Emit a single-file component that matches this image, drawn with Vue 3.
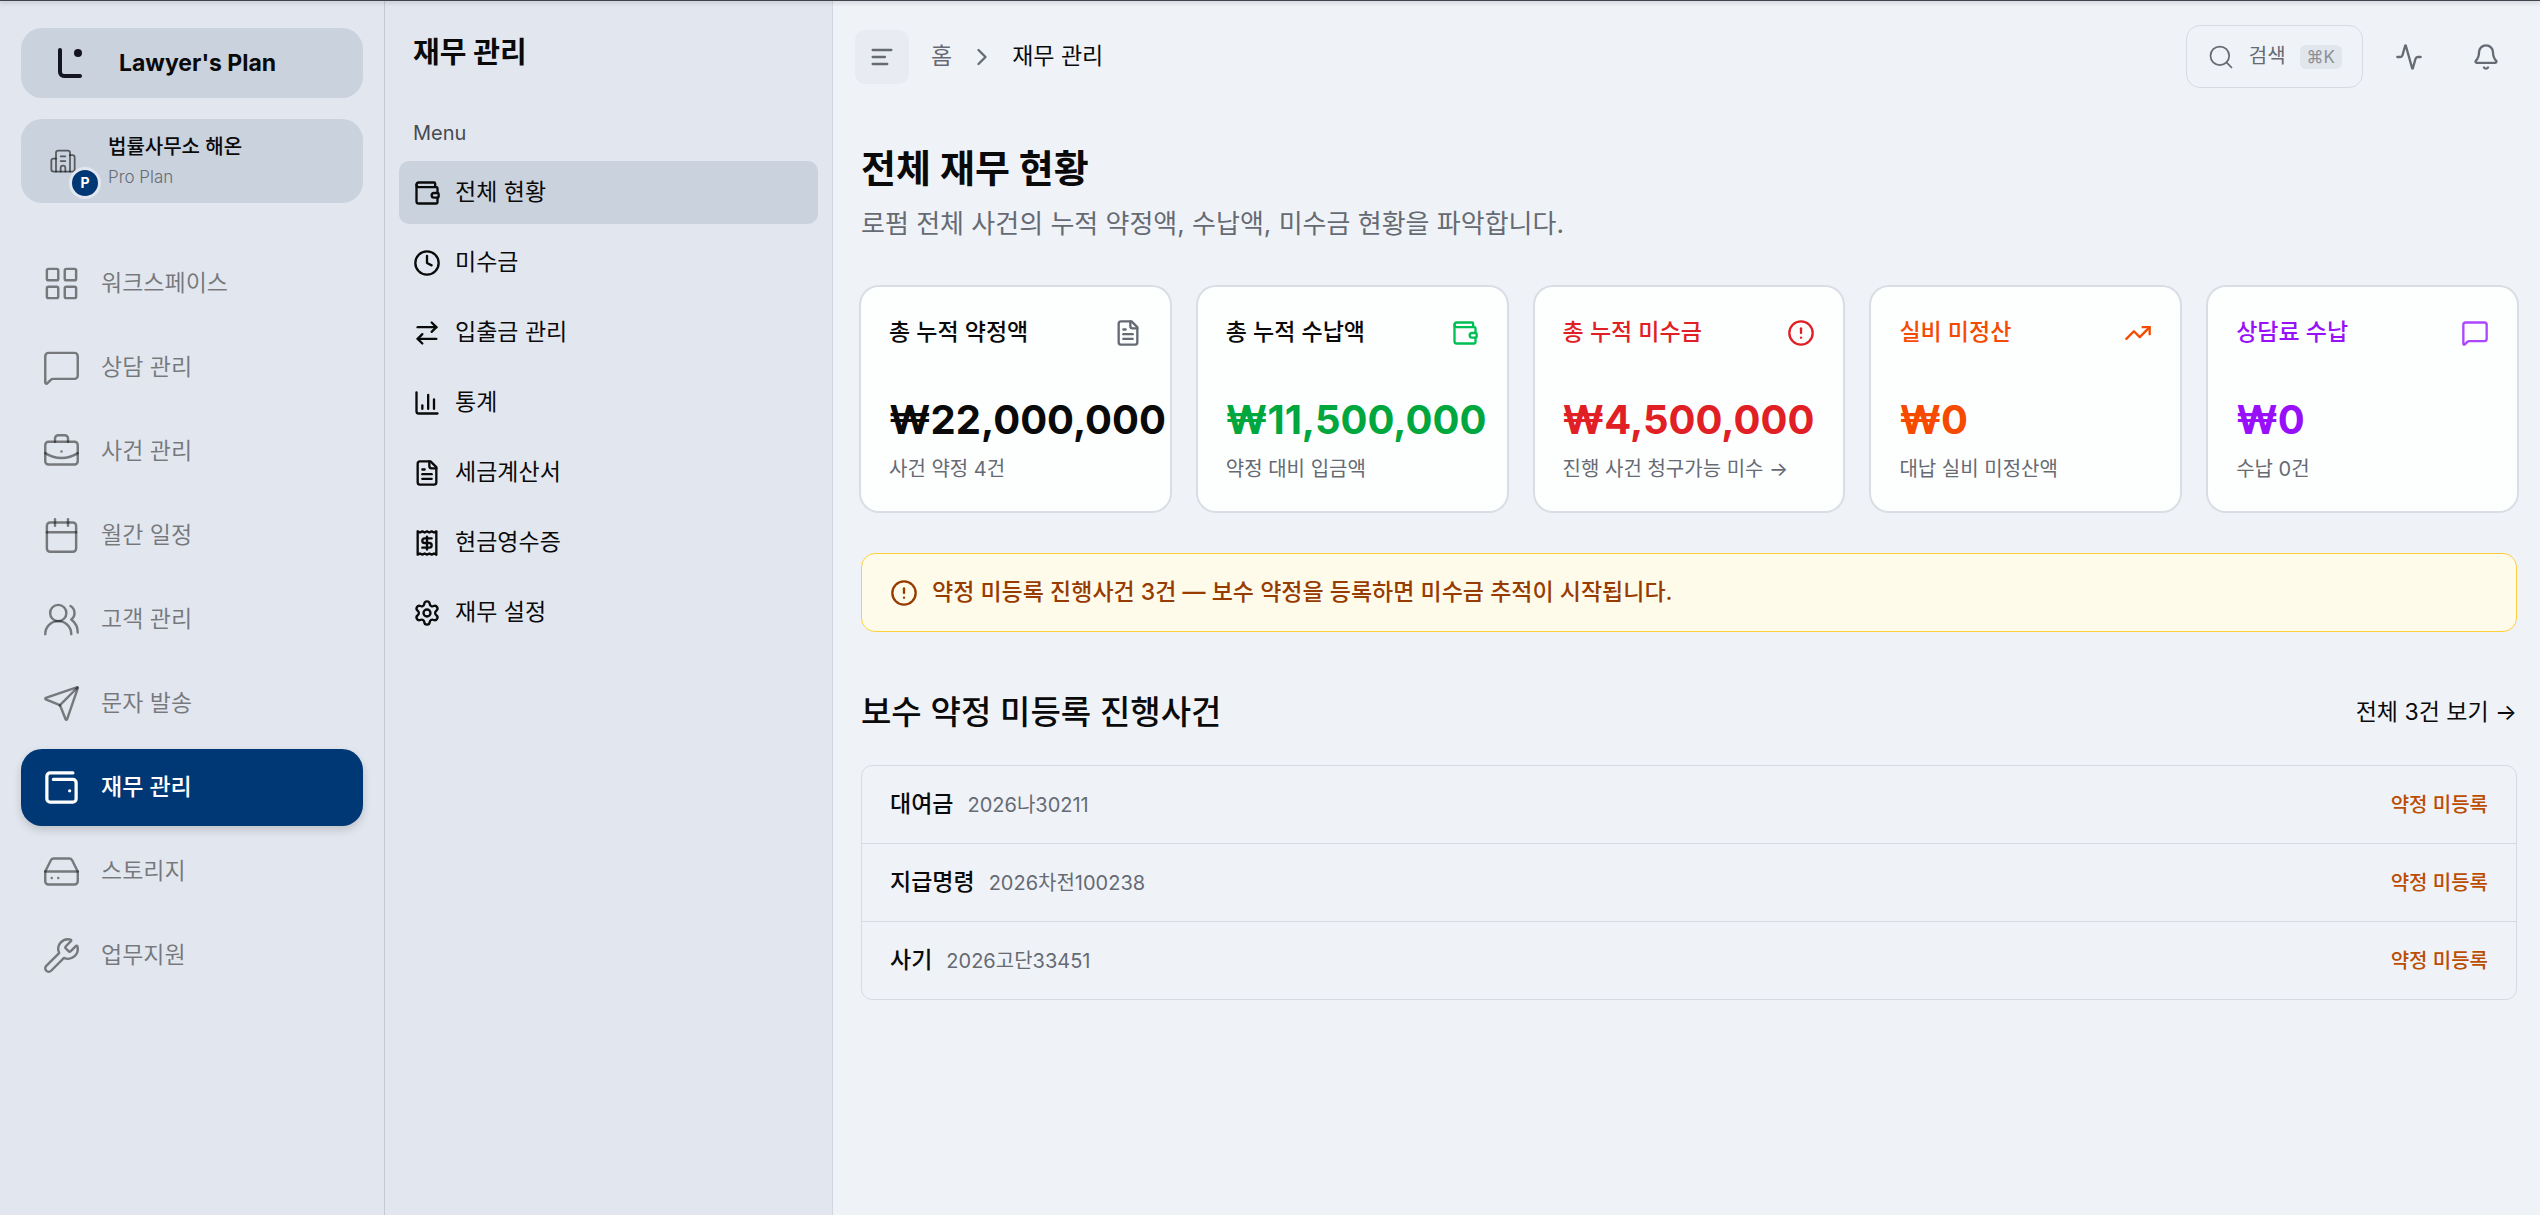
<template>
  <div class="app">
    <!-- Primary sidebar -->
    <aside class="sidebar">
      <a href="#" class="brand">
        <svg class="brand-logo" viewBox="0 0 28 34">
          <path d="M4 4v22a4 4 0 0 0 4 4h16" />
          <circle cx="22" cy="7" r="4" />
        </svg>
        <span>Lawyer's Plan</span>
      </a>

      <button type="button" class="office">
        <span class="office-icon">
          <svg class="icon thin" viewBox="0 0 24 24">
            <path v-for="d in icons.building" :key="d" :d="d" />
          </svg>
          <span class="office-badge">P</span>
        </span>
        <span class="office-text">
          <span class="office-name">법률사무소 해온</span>
          <span class="office-plan">Pro Plan</span>
        </span>
      </button>

      <nav class="main-nav">
        <a
          v-for="item in mainNav"
          :key="item.label"
          href="#"
          :class="['main-link', { 'is-active': item.active }]"
        >
          <svg class="icon" viewBox="0 0 24 24">
            <path v-for="d in icons[item.icon]" :key="d" :d="d" />
          </svg>
          <span>{{ item.label }}</span>
        </a>
      </nav>
    </aside>

    <!-- Section menu -->
    <aside class="panel">
      <h2 class="panel-title">재무 관리</h2>
      <div class="panel-label">Menu</div>
      <nav class="sub-nav">
        <a
          v-for="item in subNav"
          :key="item.label"
          href="#"
          :class="['sub-link', { 'is-active': item.active }]"
        >
          <svg class="icon" viewBox="0 0 24 24">
            <path v-for="d in icons[item.icon]" :key="d" :d="d" />
          </svg>
          <span>{{ item.label }}</span>
        </a>
      </nav>
    </aside>

    <main class="main">
      <header class="topbar">
        <button type="button" class="toggle" aria-label="메뉴 접기">
          <svg class="icon" viewBox="0 0 24 24">
            <path d="M4 6h16M4 12h10.500M4 18h12.500" />
          </svg>
        </button>
        <nav class="crumbs">
          <a href="#">홈</a>
          <svg class="icon" viewBox="0 0 24 24"><path d="m9 18 6-6-6-6" /></svg>
          <span class="crumb-current">재무 관리</span>
        </nav>
        <div class="actions">
          <button type="button" class="search">
            <svg class="icon thin" viewBox="0 0 24 24">
              <path v-for="d in icons.search" :key="d" :d="d" />
            </svg>
            <span>검색</span>
            <kbd>⌘K</kbd>
          </button>
          <button type="button" class="icon-button" aria-label="활동">
            <svg class="icon" viewBox="0 0 24 24">
              <path v-for="d in icons.activity" :key="d" :d="d" />
            </svg>
          </button>
          <button type="button" class="icon-button" aria-label="알림">
            <svg class="icon" viewBox="0 0 24 24">
              <path v-for="d in icons.bell" :key="d" :d="d" />
            </svg>
          </button>
        </div>
      </header>

      <div class="content">
        <h1>전체 재무 현황</h1>
        <p class="lead">로펌 전체 사건의 누적 약정액, 수납액, 미수금 현황을 파악합니다.</p>

        <section class="stats">
          <article v-for="s in stats" :key="s.title" :class="['stat', s.tone]">
            <div class="stat-head">
              <h3>{{ s.title }}</h3>
              <svg class="icon" viewBox="0 0 24 24">
                <path v-for="d in icons[s.icon]" :key="d" :d="d" />
              </svg>
            </div>
            <div class="stat-value">{{ s.value }}</div>
            <div class="stat-note">{{ s.note }}</div>
          </article>
        </section>

        <div class="notice">
          <svg class="icon" viewBox="0 0 24 24">
            <path v-for="d in icons.alert" :key="d" :d="d" />
          </svg>
          <span>약정 미등록 진행사건 3건 — 보수 약정을 등록하면 미수금 추적이 시작됩니다.</span>
        </div>

        <div class="section-head">
          <h2>보수 약정 미등록 진행사건</h2>
          <a href="#">전체 3건 보기 →</a>
        </div>

        <ul class="cases">
          <li v-for="c in cases" :key="c.number">
            <a href="#">
              <span class="case-name">{{ c.name }}</span>
              <span class="case-number">{{ c.number }}</span>
              <span class="case-status">약정 미등록</span>
            </a>
          </li>
        </ul>
      </div>
    </main>
  </div>
</template>

<script setup>
const icons = {
  building: [
    'M10 12h4',
    'M10 8h4',
    'M14 21v-3a2 2 0 0 0-4 0v3',
    'M6 10H4a2 2 0 0 0-2 2v7a2 2 0 0 0 2 2h16a2 2 0 0 0 2-2V9a2 2 0 0 0-2-2h-2',
    'M6 21V5a2 2 0 0 1 2-2h8a2 2 0 0 1 2 2v16'
  ],
  grid: [
    'M4 3h5a1 1 0 0 1 1 1v5a1 1 0 0 1-1 1H4a1 1 0 0 1-1-1V4a1 1 0 0 1 1-1z',
    'M15 3h5a1 1 0 0 1 1 1v5a1 1 0 0 1-1 1h-5a1 1 0 0 1-1-1V4a1 1 0 0 1 1-1z',
    'M15 14h5a1 1 0 0 1 1 1v5a1 1 0 0 1-1 1h-5a1 1 0 0 1-1-1v-5a1 1 0 0 1 1-1z',
    'M4 14h5a1 1 0 0 1 1 1v5a1 1 0 0 1-1 1H4a1 1 0 0 1-1-1v-5a1 1 0 0 1 1-1z'
  ],
  message: [
    'M22 17a2 2 0 0 1-2 2H6.828a2 2 0 0 0-1.414.586l-2.202 2.202A.71.71 0 0 1 2 21.286V5a2 2 0 0 1 2-2h16a2 2 0 0 1 2 2z'
  ],
  briefcase: [
    'M12 12h.01',
    'M16 6V4a2 2 0 0 0-2-2h-4a2 2 0 0 0-2 2v2',
    'M22 13a18.150 18.150 0 0 1-20 0',
    'M4 6h16a2 2 0 0 1 2 2v10a2 2 0 0 1-2 2H4a2 2 0 0 1-2-2V8a2 2 0 0 1 2-2z'
  ],
  calendar: [
    'M8 2v4',
    'M16 2v4',
    'M5 4h14a2 2 0 0 1 2 2v14a2 2 0 0 1-2 2H5a2 2 0 0 1-2-2V6a2 2 0 0 1 2-2z',
    'M3 10h18'
  ],
  users: [
    'M18 21a8 8 0 0 0-16 0',
    'M5 8a5 5 0 1 0 10 0a5 5 0 1 0-10 0',
    'M22 20c0-3.370-2-6.500-4-8a5 5 0 0 0-.45-8.300'
  ],
  send: [
    'M14.536 21.686a.5.5 0 0 0 .937-.024l6.500-19a.496.496 0 0 0-.635-.635l-19 6.500a.5.5 0 0 0-.024.937l7.930 3.180a2 2 0 0 1 1.112 1.110z',
    'm21.854 2.147-10.940 10.939'
  ],
  walletMinimal: [
    'M17 14h.01',
    'M7 7h12a2 2 0 0 1 2 2v10a2 2 0 0 1-2 2H5a2 2 0 0 1-2-2V5a2 2 0 0 1 2-2h14'
  ],
  drive: [
    'M22 12H2',
    'M5.450 5.110 2 12v6a2 2 0 0 0 2 2h16a2 2 0 0 0 2-2v-6l-3.450-6.890A2 2 0 0 0 16.760 4H7.240a2 2 0 0 0-1.790 1.110z',
    'M6 16h.01',
    'M10 16h.01'
  ],
  wrench: [
    'M14.700 6.300a1 1 0 0 0 0 1.400l1.600 1.600a1 1 0 0 0 1.400 0l3.106-3.105c.32-.322.863-.22.983.218a6 6 0 0 1-8.259 7.057l-7.910 7.910a1 1 0 0 1-2.999-3l7.910-7.910a6 6 0 0 1 7.057-8.259c.438.12.54.662.219.984z'
  ],
  wallet: [
    'M19 7V4a1 1 0 0 0-1-1H5a2 2 0 0 0 0 4h15a1 1 0 0 1 1 1v4h-3a2 2 0 0 0 0 4h3a1 1 0 0 0 1-1v-2a1 1 0 0 0-1-1',
    'M3 5v14a2 2 0 0 0 2 2h15a1 1 0 0 0 1-1v-4'
  ],
  clock: ['M2 12a10 10 0 1 0 20 0a10 10 0 1 0-20 0', 'M12 6v6l4 2'],
  transfer: ['m16 3 4 4-4 4', 'M20 7H4', 'm8 21-4-4 4-4', 'M4 17h16'],
  chart: ['M3 3v16a2 2 0 0 0 2 2h16', 'M18 17V9', 'M13 17V5', 'M8 17v-3'],
  file: [
    'M15 2H6a2 2 0 0 0-2 2v16a2 2 0 0 0 2 2h12a2 2 0 0 0 2-2V7z',
    'M14 2v4a2 2 0 0 0 2 2h4',
    'M10 9H8',
    'M16 13H8',
    'M16 17H8'
  ],
  receipt: [
    'M4 2v20l2-1 2 1 2-1 2 1 2-1 2 1 2-1 2 1V2l-2 1-2-1-2 1-2-1-2 1-2-1-2 1Z',
    'M16 8h-6a2 2 0 1 0 0 4h4a2 2 0 1 1 0 4H8',
    'M12 17.500v-11'
  ],
  settings: [
    'M9.671 4.136a2.340 2.340 0 0 1 4.659 0 2.340 2.340 0 0 0 3.319 1.915 2.340 2.340 0 0 1 2.330 4.033 2.340 2.340 0 0 0 0 3.831 2.340 2.340 0 0 1-2.330 4.033 2.340 2.340 0 0 0-3.319 1.915 2.340 2.340 0 0 1-4.659 0 2.340 2.340 0 0 0-3.320-1.915 2.340 2.340 0 0 1-2.330-4.033 2.340 2.340 0 0 0 0-3.831A2.340 2.340 0 0 1 6.350 6.051a2.340 2.340 0 0 0 3.319-1.915',
    'M9 12a3 3 0 1 0 6 0a3 3 0 1 0-6 0'
  ],
  search: ['M3 11a8 8 0 1 0 16 0a8 8 0 1 0-16 0', 'm21 21-4.300-4.300'],
  activity: [
    'M22 12h-2.480a2 2 0 0 0-1.930 1.460l-2.350 8.360a.25.25 0 0 1-.48 0L9.240 2.180a.25.25 0 0 0-.48 0l-2.350 8.360A2 2 0 0 1 4.490 12H2'
  ],
  bell: [
    'M10.268 21a2 2 0 0 0 3.464 0',
    'M3.262 15.326A1 1 0 0 0 4 17h16a1 1 0 0 0 .74-1.673C19.410 13.956 18 12.499 18 8A6 6 0 0 0 6 8c0 4.499-1.411 5.956-2.738 7.326'
  ],
  alert: ['M2 12a10 10 0 1 0 20 0a10 10 0 1 0-20 0', 'M12 8v4', 'M12 16h.01'],
  trend: ['M16 7h6v6', 'm22 7-8.500 8.500-5-5L2 17']
}

const mainNav = [
  { label: '워크스페이스', icon: 'grid' },
  { label: '상담 관리', icon: 'message' },
  { label: '사건 관리', icon: 'briefcase' },
  { label: '월간 일정', icon: 'calendar' },
  { label: '고객 관리', icon: 'users' },
  { label: '문자 발송', icon: 'send' },
  { label: '재무 관리', icon: 'walletMinimal', active: true },
  { label: '스토리지', icon: 'drive' },
  { label: '업무지원', icon: 'wrench' }
]

const subNav = [
  { label: '전체 현황', icon: 'wallet', active: true },
  { label: '미수금', icon: 'clock' },
  { label: '입출금 관리', icon: 'transfer' },
  { label: '통계', icon: 'chart' },
  { label: '세금계산서', icon: 'file' },
  { label: '현금영수증', icon: 'receipt' },
  { label: '재무 설정', icon: 'settings' }
]

const stats = [
  { title: '총 누적 약정액', value: '₩22,000,000', note: '사건 약정 4건', icon: 'file', tone: 'plain' },
  { title: '총 누적 수납액', value: '₩11,500,000', note: '약정 대비 입금액', icon: 'wallet', tone: 'green' },
  { title: '총 누적 미수금', value: '₩4,500,000', note: '진행 사건 청구가능 미수 →', icon: 'alert', tone: 'red' },
  { title: '실비 미정산', value: '₩0', note: '대납 실비 미정산액', icon: 'trend', tone: 'orange' },
  { title: '상담료 수납', value: '₩0', note: '수납 0건', icon: 'message', tone: 'purple' }
]

const cases = [
  { name: '대여금', number: '2026나30211' },
  { name: '지급명령', number: '2026차전100238' },
  { name: '사기', number: '2026고단33451' }
]
</script>

<style>
body {
  background: #eff3f8;
}
</style>

<style scoped>
.app {
  position: relative;
  display: grid;
  grid-template-columns: 385px 448px minmax(0, 1fr);
  min-height: 100vh;
  background: #eff3f8;
  color: #0a0a0a;
  font-family: Inter, "Noto Sans CJK KR", sans-serif;
  font-size: 23px;
  line-height: 35px;
}

/* Thin edge under the window frame */
.app::before {
  content: "";
  position: absolute;
  top: 0;
  left: 0;
  right: 0;
  height: 1px;
  background: #40434b;
  box-shadow: 0 1px 4px rgba(40, 30, 50, 0.5);
}

.app *,
.app *::before {
  box-sizing: border-box;
}

h1,
h2,
h3,
p,
ul {
  margin: 0;
  padding: 0;
}

a {
  color: inherit;
  text-decoration: none;
}

button {
  border: 0;
  padding: 0;
  background: none;
  color: inherit;
  font: inherit;
  text-align: left;
}

.icon {
  flex: none;
  width: 28px;
  height: 28px;
  fill: none;
  stroke: currentColor;
  stroke-width: 2;
  stroke-linecap: round;
  stroke-linejoin: round;
}

.icon.thin {
  stroke-width: 1.5;
}

/* Sidebar */
.sidebar {
  padding: 28px 21px;
  border-right: 1px solid #c4cad4;
  background: #e2e7ef;
}

.brand {
  display: flex;
  align-items: center;
  gap: 35px;
  height: 70px;
  padding-left: 35px;
  border-radius: 21px;
  background: #cad2dd;
  font-weight: 700;
}

.brand-logo {
  width: 28px;
  height: 34px;
  fill: #151522;
}

.brand-logo path {
  fill: none;
  stroke: #151522;
  stroke-width: 4;
  stroke-linecap: round;
}

.office {
  display: flex;
  align-items: center;
  gap: 31px;
  width: 100%;
  height: 84px;
  margin-top: 21px;
  padding-left: 28px;
  border-radius: 21px;
  background: #cad2dd;
}

.office-icon {
  position: relative;
  display: flex;
  color: rgba(10, 10, 10, 0.6);
}

.office-badge {
  position: absolute;
  left: 20px;
  top: 20px;
  width: 32px;
  height: 32px;
  border: 3px solid #e2e7ef;
  border-radius: 50%;
  background: #003876;
  color: #fff;
  font-size: 14px;
  font-weight: 700;
  line-height: 26px;
  text-align: center;
}

.office-text {
  display: flex;
  flex-direction: column;
}

.office-name {
  font-size: 20px;
  font-weight: 500;
  line-height: 32px;
}

.office-plan {
  color: #686c75;
  font-size: 17px;
  font-weight: 300;
  line-height: 28px;
}

.main-nav {
  display: flex;
  flex-direction: column;
  gap: 7px;
  margin-top: 42px;
}

.main-link {
  display: flex;
  align-items: center;
  gap: 20px;
  height: 77px;
  padding-left: 21px;
  border-radius: 21px;
  color: rgba(10, 10, 10, 0.5);
}

.main-link .icon {
  width: 39px;
  height: 39px;
  stroke-width: 1.5;
}

.main-link.is-active {
  background: #003876;
  box-shadow: 0 4px 8px rgba(0, 0, 0, 0.16);
  color: #fff;
  font-weight: 500;
}

.main-link.is-active .icon {
  stroke-width: 2;
}

/* Section menu */
.panel {
  padding: 28px 14px;
  border-right: 1px solid #d2d8e1;
  background: #e2e7ef;
}

.panel-title {
  padding-left: 14px;
  font-size: 29px;
  font-weight: 700;
  line-height: 49px;
}

.panel-label {
  margin-top: 42px;
  padding-left: 14px;
  color: #484b50;
  font-size: 20px;
  line-height: 28px;
}

.sub-nav {
  display: flex;
  flex-direction: column;
  gap: 7px;
  margin-top: 14px;
}

.sub-link {
  display: flex;
  align-items: center;
  gap: 14px;
  height: 63px;
  padding-left: 14px;
  border-radius: 10px;
}

.sub-link.is-active {
  background: #cad2dd;
}

/* Top bar */
.topbar {
  display: flex;
  align-items: center;
  gap: 22px;
  padding: 25px 23px 0 22px;
  color: #666a73;
}

.toggle {
  display: flex;
  align-items: center;
  justify-content: center;
  width: 54px;
  height: 54px;
  border-radius: 10px;
  background: #e8ebf2;
}

.crumbs {
  display: flex;
  align-items: center;
  gap: 16px;
}

.crumb-current {
  color: #0a0a0a;
}

.actions {
  display: flex;
  gap: 14px;
  margin-left: auto;
}

.search {
  display: flex;
  align-items: center;
  gap: 14px;
  height: 63px;
  padding: 0 20px;
  border: 1px solid #d7dbe1;
  border-radius: 14px;
  font-size: 20px;
}

kbd {
  padding: 0 7px;
  border-radius: 6px;
  background: #e1e5ec;
  color: #8c9098;
  font-family: inherit;
  font-size: 17px;
  line-height: 24px;
}

.icon-button {
  display: flex;
  align-items: center;
  justify-content: center;
  width: 63px;
  height: 63px;
}

/* Page */
.content {
  padding: 55px 23px 42px 28px;
}

h1 {
  font-size: 38px;
  font-weight: 700;
  line-height: 50px;
}

.lead {
  margin-top: 10px;
  color: #666a73;
  font-size: 26px;
  line-height: 42px;
}

.stats {
  display: grid;
  grid-template-columns: repeat(5, minmax(0, 1fr));
  gap: 28px;
  margin-top: 42px;
}

.stat {
  padding: 28px;
  border-radius: 18px;
  background: #fdfefe;
  box-shadow: 0 0 0 2px #d9dde4;
  white-space: nowrap;
}

.stat-head {
  display: flex;
  align-items: center;
  justify-content: space-between;
}

.stat-head .icon {
  stroke-width: 2;
}

.stat h3 {
  font-size: 23px;
  font-weight: 500;
}

.stat-value {
  margin-top: 42px;
  font-size: 40px;
  font-weight: 700;
  line-height: 56px;
}

.stat-note {
  margin-top: 7px;
  color: #666a73;
  font-size: 20px;
  line-height: 28px;
}

.plain .icon {
  color: #666a73;
}

.green .icon {
  color: #00bf55;
}

.green .stat-value {
  color: #00a63e;
}

.red h3,
.red .icon,
.red .stat-value {
  color: #e02024;
}

.orange h3,
.orange .icon,
.orange .stat-value {
  color: #f54a00;
}

.purple h3,
.purple .stat-value {
  color: #9810fa;
}

.purple .icon {
  color: #ad46ff;
}

.notice {
  display: flex;
  align-items: center;
  gap: 14px;
  margin-top: 42px;
  padding: 21px 28px;
  border: 1px solid #ffd03c;
  border-radius: 14px;
  background: #fffbeb;
  color: #973c00;
  font-weight: 500;
}

.section-head {
  display: flex;
  align-items: center;
  justify-content: space-between;
  margin-top: 56px;
}

.section-head h2 {
  font-size: 33px;
  font-weight: 500;
  line-height: 49px;
}

.cases {
  margin-top: 28px;
  border: 1px solid #d7dbe1;
  border-radius: 11px;
  list-style: none;
}

.cases li + li {
  border-top: 1px solid #d7dbe1;
}

.cases a {
  display: flex;
  align-items: baseline;
  gap: 14px;
  padding: 21px 28px;
}

.case-name {
  font-weight: 500;
}

.case-number {
  color: #666a73;
  font-size: 20px;
  line-height: 28px;
}

.case-status {
  margin-left: auto;
  color: #bb4d00;
  font-size: 20px;
  font-weight: 500;
  line-height: 28px;
}
</style>
